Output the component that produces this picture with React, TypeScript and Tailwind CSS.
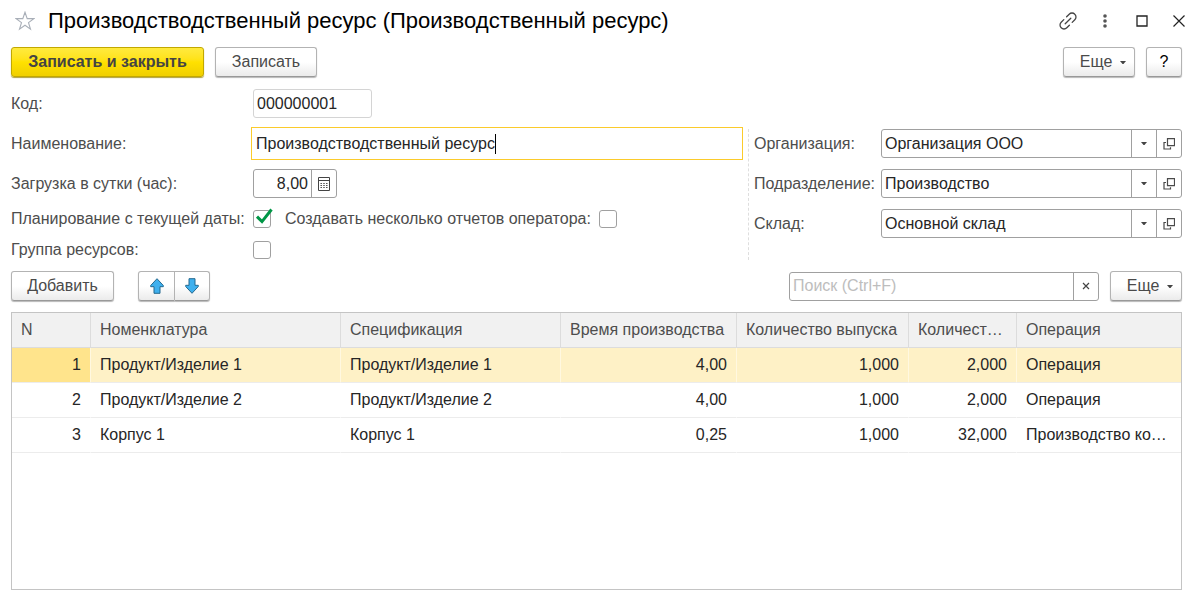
import React, { useState } from 'react';

type Row = {
    name: string;
    spec: string;
    time: string;
    output: string;
    count: string;
    operation: string;
};

const rows: Row[] = [
    { name: 'Продукт/Изделие 1', spec: 'Продукт/Изделие 1', time: '4,00', output: '1,000', count: '2,000', operation: 'Операция' },
    { name: 'Продукт/Изделие 2', spec: 'Продукт/Изделие 2', time: '4,00', output: '1,000', count: '2,000', operation: 'Операция' },
    { name: 'Корпус 1', spec: 'Корпус 1', time: '0,25', output: '1,000', count: '32,000', operation: 'Производство корпуса' },
];

const buttonClass =
    'flex h-[30px] items-center justify-center rounded-[3px] border border-[#b3b3b3] border-b-[#999] bg-linear-to-b from-white from-50% to-[#ebebeb] text-[#4a4a4a] shadow-[0_1px_1px_#b8b8b8]';
const fieldClass = 'flex h-[29px] rounded-[3px] border border-[#a0a0a0] bg-white';
const inputClass = 'min-w-0 flex-1 bg-transparent px-[3px] text-[#262626] outline-none';
const fieldButtonClass = 'flex w-[25px] shrink-0 items-center justify-center border-l border-[#a0a0a0]';

const CaretIcon = () => (
    <svg className="h-[3px] w-[6px]" viewBox="0 0 6 3" fill="#444">
        <path d="M0 0h6L3.500 3h-1z" />
    </svg>
);

const OpenIcon = () => (
    <svg className="h-3 w-3" viewBox="0 0 12 12" fill="none" stroke="#4a4a4a" strokeWidth="1.2">
        <path d="M4.500 .6h7v7h-7z" />
        <path d="M3 4.500H1v6.500h6.500V9.200" />
    </svg>
);

const MoreButton = () => (
    <button type="button" className={`${buttonClass} w-[72px] gap-2 pl-2`}>
        Еще
        <CaretIcon />
    </button>
);

const Checkbox: React.FC<{ id: string; initial?: boolean }> = ({ id, initial = false }) => {
    const [checked, setChecked] = useState(initial);
    return (
        <span className="relative flex">
            <input
                id={id}
                type="checkbox"
                checked={checked}
                onChange={() => setChecked(!checked)}
                className="h-[18px] w-[18px] appearance-none rounded-[3px] border border-[#a0a0a0] bg-white"
            />
            {checked && (
                <svg className="pointer-events-none absolute -top-0.5 left-0 h-5 w-5" viewBox="0 0 20 20" fill="none" stroke="#009646" strokeWidth="3">
                    <path d="M4 8.600 9 13.600 18.500 1.500" />
                </svg>
            )}
        </span>
    );
};

const LookupField: React.FC<{ id: string; label: string; initial: string }> = ({ id, label, initial }) => (
    <div className="flex items-center">
        <label htmlFor={id} className="w-[127px] shrink-0">{label}</label>
        <div className={`${fieldClass} min-w-0 flex-1`}>
            <input id={id} type="text" defaultValue={initial} className={inputClass} />
            <button type="button" aria-label="Выбрать" className={fieldButtonClass}><CaretIcon /></button>
            <button type="button" aria-label="Открыть" className={fieldButtonClass}><OpenIcon /></button>
        </div>
    </div>
);

const TitleBar = () => (
    <header className="flex h-[42px] items-center">
        <button type="button" aria-label="В избранное" className="ml-1">
            <svg className="h-5 w-5" viewBox="0 0 20 20" fill="none" stroke="#a9afb8" strokeWidth="1.1">
                <path d="m10 1.2 2.2 6.4h6.6l-5.3 4 2 6.6L10 14.2l-5.5 4 2-6.6-5.3-4h6.6z" />
            </svg>
        </button>
        <h1 className="ml-[13px] flex-1 text-[22px] text-black">Производстводственный ресурс (Производственный ресурс)</h1>
        <div className="-mr-[7px] flex items-center gap-[17px]">
            <button type="button" aria-label="Ссылка">
                <svg className="h-5 w-5" viewBox="0 0 20 20" fill="none" stroke="#444" strokeWidth="1.3" strokeLinecap="round">
                    <path d="M8.600 5.800 11.200 3.200a3.900 3.900 0 0 1 5.600 0 3.900 3.900 0 0 1 0 5.600l-2.600 2.600" />
                    <path d="M5.800 8.600 3.200 11.200a3.900 3.900 0 0 0 0 5.600 3.900 3.900 0 0 0 5.600 0l2.600-2.600" />
                    <path d="M7.200 12.800l5.600-5.600" />
                </svg>
            </button>
            <button type="button" aria-label="Меню">
                <svg className="h-5 w-5" viewBox="0 0 20 20" fill="#555">
                    <circle cx="10" cy="5" r="1.8" />
                    <circle cx="10" cy="10" r="1.8" />
                    <circle cx="10" cy="15" r="1.8" />
                </svg>
            </button>
            <button type="button" aria-label="Развернуть">
                <svg className="h-5 w-5" viewBox="0 0 20 20" fill="none" stroke="#222" strokeWidth="1.3">
                    <path d="M5 5h10v10H5z" />
                </svg>
            </button>
            <button type="button" aria-label="Закрыть">
                <svg className="h-5 w-5" viewBox="0 0 20 20" fill="none" stroke="#222" strokeWidth="1.2">
                    <path d="M4.500 4.500l11 11M15.500 4.500l-11 11" />
                </svg>
            </button>
        </div>
    </header>
);

const ResourceForm = () => (
    <div className="mt-3">
        <div className="flex items-center">
            <label htmlFor="code" className="w-[242px]">Код:</label>
            <div className="flex h-[29px] w-[119px] rounded-[3px] border border-[#d4d4d4]">
                <input id="code" type="text" readOnly defaultValue="000000001" className={inputClass} />
            </div>
        </div>

        <div className="mt-[11px] flex">
            <div className="min-w-0 flex-1 pr-[7px]">
                <div className="flex items-center">
                    <label htmlFor="title" className="w-[242px] shrink-0">Наименование:</label>
                    <div className="-m-0.5 flex h-[33px] min-w-0 flex-1 items-center border border-[#fbcb2b] bg-white">
                        <input
                            id="title"
                            type="text"
                            defaultValue="Производстводственный ресурс"
                            className="field-sizing-content max-w-full bg-transparent pl-1 text-[#262626] caret-transparent outline-none"
                        />
                        <span className="h-5 w-px bg-black" />
                    </div>
                </div>
                <div className="mt-[11px] flex items-center">
                    <label htmlFor="load" className="w-[242px] shrink-0">Загрузка в сутки (час):</label>
                    <div className={`${fieldClass} w-[84px]`}>
                        <input id="load" type="text" defaultValue="8,00" className={`${inputClass} text-right`} />
                        <button type="button" aria-label="Калькулятор" className={fieldButtonClass}>
                            <svg className="h-[14px] w-3" viewBox="0 0 12 14" fill="none" stroke="#444">
                                <path d="M.5.5h11v13H.5zM.5 3.500h11" />
                                <path d="M2.500 6.500h7M2.500 8.500h7M2.500 10.500h7" strokeDasharray="1.400 1.400" />
                            </svg>
                        </button>
                    </div>
                </div>
                <div className="mt-[5px] flex h-[31px] items-center">
                    <label htmlFor="fromToday" className="w-[242px] shrink-0 whitespace-nowrap">Планирование с текущей даты:</label>
                    <Checkbox id="fromToday" initial />
                    <label htmlFor="reports" className="ml-[14px] mr-2 whitespace-nowrap">Создавать несколько отчетов оператора:</label>
                    <Checkbox id="reports" />
                </div>
                <div className="flex h-[31px] items-center">
                    <label htmlFor="group" className="w-[242px] shrink-0">Группа ресурсов:</label>
                    <Checkbox id="group" />
                </div>
            </div>
            <div className="mb-[5px] flex w-[434px] shrink-0 flex-col gap-[11px] border-l border-dashed border-[#dedede] pl-[5px]">
                <LookupField id="organization" label="Организация:" initial="Организация ООО" />
                <LookupField id="department" label="Подразделение:" initial="Производство" />
                <LookupField id="warehouse" label="Склад:" initial="Основной склад" />
            </div>
        </div>
    </div>
);

const TableToolbar = () => (
    <div className="mt-[6px] flex items-center">
        <button type="button" className={`${buttonClass} w-[103px]`}>Добавить</button>
        <div className="ml-6 flex">
            <button type="button" aria-label="Переместить вверх" className={`${buttonClass} w-[37px] rounded-r-none`}>
                <svg className="h-4 w-[14px]" viewBox="0 0 14 16" fill="#3fb0ee" stroke="#23698f" strokeLinejoin="round">
                    <path d="M7 .7 13.300 7.500v1.200H10v6.600H4V8.700H.7V7.500z" />
                </svg>
            </button>
            <button type="button" aria-label="Переместить вниз" className={`${buttonClass} w-[35px] rounded-l-none border-l-0`}>
                <svg className="h-4 w-[14px]" viewBox="0 0 14 16" fill="#3fb0ee" stroke="#23698f" strokeLinejoin="round">
                    <path d="M7 15.300 13.300 8.500V7.300H10V.7H4v6.600H.7v1.200z" />
                </svg>
            </button>
        </div>
        <div className={`${fieldClass} ml-auto mr-[11px] w-[310px]`}>
            <input type="text" aria-label="Поиск" placeholder="Поиск (Ctrl+F)" className={`${inputClass} placeholder:text-[#bdbdbd]`} />
            <button type="button" aria-label="Очистить" className={fieldButtonClass}>
                <svg className="h-2 w-2" viewBox="0 0 8 8" stroke="#444" strokeWidth="1.2">
                    <path d="M1 1l6 6M7 1L1 7" />
                </svg>
            </button>
        </div>
        <MoreButton />
    </div>
);

const headClass = 'truncate border-r border-b border-[#dcdcdc] px-[9px] text-left font-normal last:border-r-0';
const cellClass = 'truncate border-r border-b border-b-[#ececec] px-[9px] last:border-r-0';

const ResourceTable = () => {
    const [selected, setSelected] = useState(0);
    return (
        <div className="mt-[11px] flex-1 border border-[#c4c4c4]">
            <table className="w-full table-fixed border-separate border-spacing-0">
                <colgroup>
                    <col className="w-[79px]" />
                    <col className="w-[250px]" />
                    <col className="w-[220px]" />
                    <col className="w-[176px]" />
                    <col className="w-[172px]" />
                    <col className="w-[108px]" />
                    <col />
                </colgroup>
                <thead>
                    <tr className="h-[35px] bg-[#f1f1f1] text-[#4d4d4d]">
                        <th className={headClass}>N</th>
                        <th className={headClass}>Номенклатура</th>
                        <th className={headClass}>Спецификация</th>
                        <th className={headClass}>Время производства</th>
                        <th className={headClass}>Количество выпуска</th>
                        <th className={headClass}>Количество операций</th>
                        <th className={headClass}>Операция</th>
                    </tr>
                </thead>
                <tbody>
                    {rows.map((row, index) => {
                        const active = index === selected;
                        const cell = `${cellClass} ${active ? 'border-r-[#fff8e0]' : 'border-r-transparent'}`;
                        return (
                            <tr
                                key={index}
                                onClick={() => setSelected(index)}
                                className={`h-[35px] text-[#262626] ${active ? 'bg-[#fef1c6]' : 'bg-white'}`}
                            >
                                <td className={`${cell} text-right ${active ? 'bg-[#ffe48c]' : ''}`}>{index + 1}</td>
                                <td className={cell}>{row.name}</td>
                                <td className={cell}>{row.spec}</td>
                                <td className={`${cell} text-right`}>{row.time}</td>
                                <td className={`${cell} text-right`}>{row.output}</td>
                                <td className={`${cell} text-right`}>{row.count}</td>
                                <td className={cell}>{row.operation}</td>
                            </tr>
                        );
                    })}
                </tbody>
            </table>
        </div>
    );
};

const App: React.FC = () => (
    <div className="flex min-h-screen flex-col bg-white pr-[18px] pb-[14px] pl-[11px] font-['Liberation_Sans',Arial,sans-serif] text-[16px] leading-5 text-[#4d4d4d]">
        <TitleBar />
        <div className="mt-[5px] flex gap-[11px]">
            <button
                type="button"
                className="h-[30px] w-[193px] rounded-[3px] border border-[#c2a800] bg-linear-to-b from-[#ffea3d] via-[#ffe100] to-[#f0cf00] font-bold text-[#444] shadow-[0_1px_1px_#b0a040]"
            >
                Записать и закрыть
            </button>
            <button type="button" className={`${buttonClass} w-[102px]`}>Записать</button>
            <div className="ml-auto flex gap-[11px]">
                <MoreButton />
                <button type="button" aria-label="Справка" className={`${buttonClass} w-[36px] text-black`}>?</button>
            </div>
        </div>
        <ResourceForm />
        <TableToolbar />
        <ResourceTable />
    </div>
);

export default App;
